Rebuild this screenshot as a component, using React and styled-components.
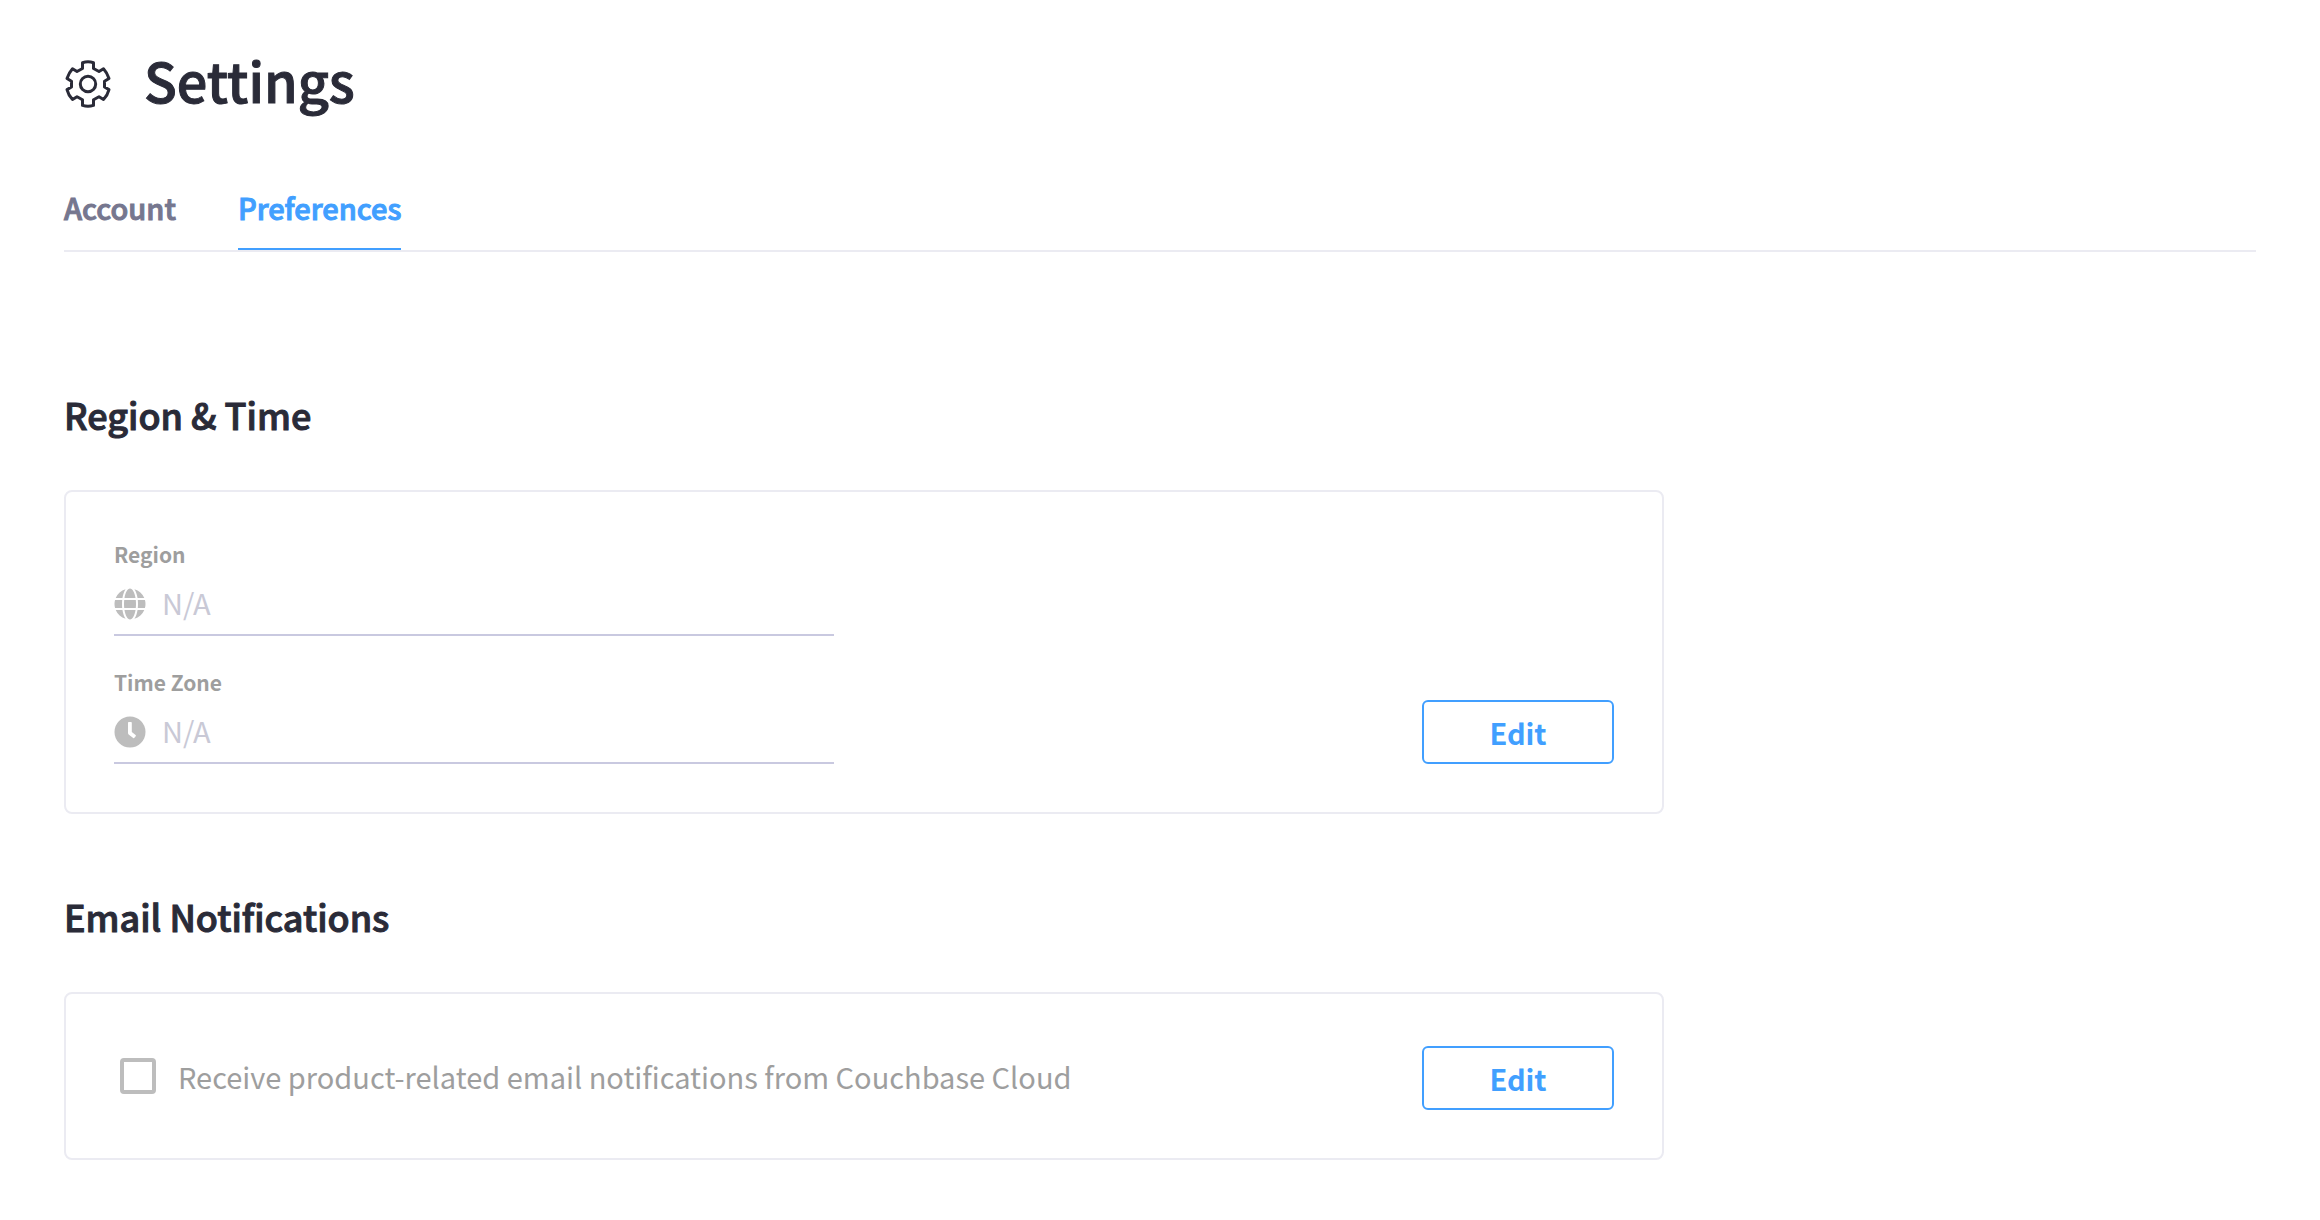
import React, { useState } from "react";
import styled, { createGlobalStyle, css } from "styled-components";

const GlobalStyle = createGlobalStyle`
  *, *::before, *::after { box-sizing: border-box; }
  body {
    margin: 0;
    background: #fff;
    color: #2a2b38;
    font-family: "Noto Sans CJK SC", "Open Sans", sans-serif;
    font-size: 29px;
  }
`;

const semibold = css`
  font-weight: 500;
  -webkit-text-stroke: 1px currentColor;
`;

const Page = styled.div`
  padding: 48px 64px;
`;

const Header = styled.header`
  display: flex;
  align-items: flex-end;
  gap: 32px;
`;

const GearSvg = styled.svg`
  flex: none;
  width: 48px;
  height: 56px;
`;

const PageTitle = styled.h1`
  margin: 0;
  font-size: 54px;
  line-height: 64px;
  ${semibold}
`;

const Tabs = styled.nav`
  display: flex;
  gap: 62px;
  margin-top: 76px;
  border-bottom: 2px solid #ebebf2;
`;

const Tab = styled.a`
  padding-bottom: 22px;
  border-bottom: 2px solid ${(p) => (p.$active ? "#419fff" : "transparent")};
  color: ${(p) => (p.$active ? "#419fff" : "#76778f")};
  line-height: 38px;
  text-decoration: none;
  ${semibold}
`;

const Main = styled.main`
  max-width: 1600px;
  padding-top: 60px;
`;

const Section = styled.section`
  padding-top: 78px;
`;

const SectionTitle = styled.h2`
  margin: 0 0 52px;
  font-size: 36px;
  line-height: 48px;
  ${semibold}
`;

const Card = styled.div`
  display: flex;
  align-items: flex-end;
  justify-content: space-between;
  gap: 32px;
  padding: 48px;
  border: 2px solid #ebebf2;
  border-radius: 8px;
`;

const Fields = styled.div`
  display: flex;
  flex: 0 1 720px;
  flex-direction: column;
  gap: 32px;
`;

const FieldLabel = styled.label`
  display: block;
  color: #9e9e9e;
  font-size: 21px;
  font-weight: 700;
  line-height: 28px;
`;

const FieldRow = styled.div`
  display: flex;
  align-items: center;
  gap: 16px;
  height: 62px;
  margin-top: 6px;
  border-bottom: 2px solid #c9c9e0;
`;

const FieldIcon = styled.svg`
  flex: none;
  width: 32px;
  height: 32px;
  color: #bdbdbd;
`;

const FieldInput = styled.input`
  flex: 1;
  min-width: 0;
  padding: 0 0 4px;
  border: 0;
  outline: 0;
  background: none;
  color: #c9c9d6;
  font: inherit;
`;

const EditButton = styled.button`
  flex: none;
  width: 192px;
  height: 64px;
  padding: 0;
  border: 2px solid #419fff;
  border-radius: 6px;
  background: #fff;
  color: #419fff;
  font: inherit;
  font-weight: 700;
  cursor: pointer;
`;

const CheckLabel = styled.label`
  display: flex;
  align-items: center;
  gap: 22px;
  height: 68px;
  padding-left: 6px;
  color: #9e9e9e;
`;

const Checkbox = styled.input`
  flex: none;
  appearance: none;
  width: 36px;
  height: 36px;
  margin: 0;
  border: 4px solid #bdbdbd;
  border-radius: 4px;
  background: #fff;

  &:checked {
    background: #bdbdbd;
  }
`;

const GearIcon = () => (
  <GearSvg viewBox="0 0 48 56" fill="none" stroke="currentColor" strokeWidth="3" strokeLinejoin="round" aria-hidden="true">
    <path d="M18.500 6.700Q24 5 29.500 6.700V12.500L35 15.500L39.500 12.700Q43 16.500 45 22.500L40.500 25.200V31L45 33.600Q43.500 39.500 39.500 43.500L35 40.700L29.500 43.800V49.400Q24 51 18.500 49.400V43.800L13 40.700L8.500 43.500Q4.500 39.500 3 33.600L7.500 31V25.200L3 22.500Q5 16.500 8.500 12.700L13 15.500L18.500 12.500Z" />
    <circle cx="24" cy="28" r="7.700" />
  </GearSvg>
);

const GlobeIcon = () => (
  <FieldIcon viewBox="0 0 496 512" fill="currentColor" aria-hidden="true">
    <path d="M336.500 160C322 70.700 287.800 8 248 8s-74 62.700-88.500 152h177zM152 256c0 22.200 1.200 43.500 3.300 64h185.300c2.100-20.500 3.300-41.800 3.300-64s-1.200-43.500-3.300-64H155.300c-2.100 20.500-3.300 41.800-3.300 64zm324.700-96c-28.600-67.900-86.500-120.400-158-141.600 24.400 33.800 41.200 84.700 50 141.600h108zM177.200 18.400C105.800 39.600 47.800 92.100 19.300 160h108c8.700-56.900 25.500-107.800 49.900-141.600zM487.400 192H372.700c2.100 21 3.300 42.500 3.300 64s-1.200 43-3.300 64h114.600c5.500-20.500 8.600-41.800 8.600-64s-3.100-43.500-8.500-64zM120 256c0-21.500 1.200-43 3.300-64H8.600C3.200 212.500 0 233.800 0 256s3.200 43.500 8.600 64h114.600c-2-21-3.200-42.500-3.200-64zm39.500 96c14.500 89.300 48.700 152 88.500 152s74-62.700 88.500-152h-177zm159.300 141.600c71.400-21.200 129.400-73.700 158-141.600h-108c-8.800 56.900-25.600 107.800-50 141.600zM19.300 352c28.600 67.900 86.500 120.400 158 141.600-24.400-33.800-41.200-84.700-50-141.600h-108z" />
  </FieldIcon>
);

const ClockIcon = () => (
  <FieldIcon viewBox="0 0 32 32" aria-hidden="true">
    <circle cx="16" cy="16" r="15.500" fill="currentColor" />
    <path d="M14.800 6H17Q17.800 6 17.800 6.800V16L21.600 19Q22.200 19.600 21.700 20.200L20.400 21.800Q19.800 22.400 19.200 21.900L14.600 18.400Q14 17.900 14 17V6.800Q14 6 14.800 6Z" fill="#fff" />
  </FieldIcon>
);

const Field = ({ id, label, value, icon }) => (
  <div>
    <FieldLabel htmlFor={id}>{label}</FieldLabel>
    <FieldRow>
      {icon}
      <FieldInput id={id} type="text" value={value} readOnly />
    </FieldRow>
  </div>
);

export default function App() {
  const [subscribed, setSubscribed] = useState(false);

  return (
    <>
      <GlobalStyle />
      <Page>
        <Header>
          <GearIcon />
          <PageTitle>Settings</PageTitle>
        </Header>
        <Tabs>
          <Tab href="#account">Account</Tab>
          <Tab href="#preferences" $active aria-current="page">Preferences</Tab>
        </Tabs>
        <Main>
          <Section>
            <SectionTitle>Region &amp; Time</SectionTitle>
            <Card>
              <Fields>
                <Field id="region" label="Region" value="N/A" icon={<GlobeIcon />} />
                <Field id="time-zone" label="Time Zone" value="N/A" icon={<ClockIcon />} />
              </Fields>
              <EditButton type="button">Edit</EditButton>
            </Card>
          </Section>
          <Section>
            <SectionTitle>Email Notifications</SectionTitle>
            <Card>
              <CheckLabel>
                <Checkbox
                  type="checkbox"
                  checked={subscribed}
                  onChange={(e) => setSubscribed(e.target.checked)}
                />
                Receive product-related email notifications from Couchbase Cloud
              </CheckLabel>
              <EditButton type="button">Edit</EditButton>
            </Card>
          </Section>
        </Main>
      </Page>
    </>
  );
}
